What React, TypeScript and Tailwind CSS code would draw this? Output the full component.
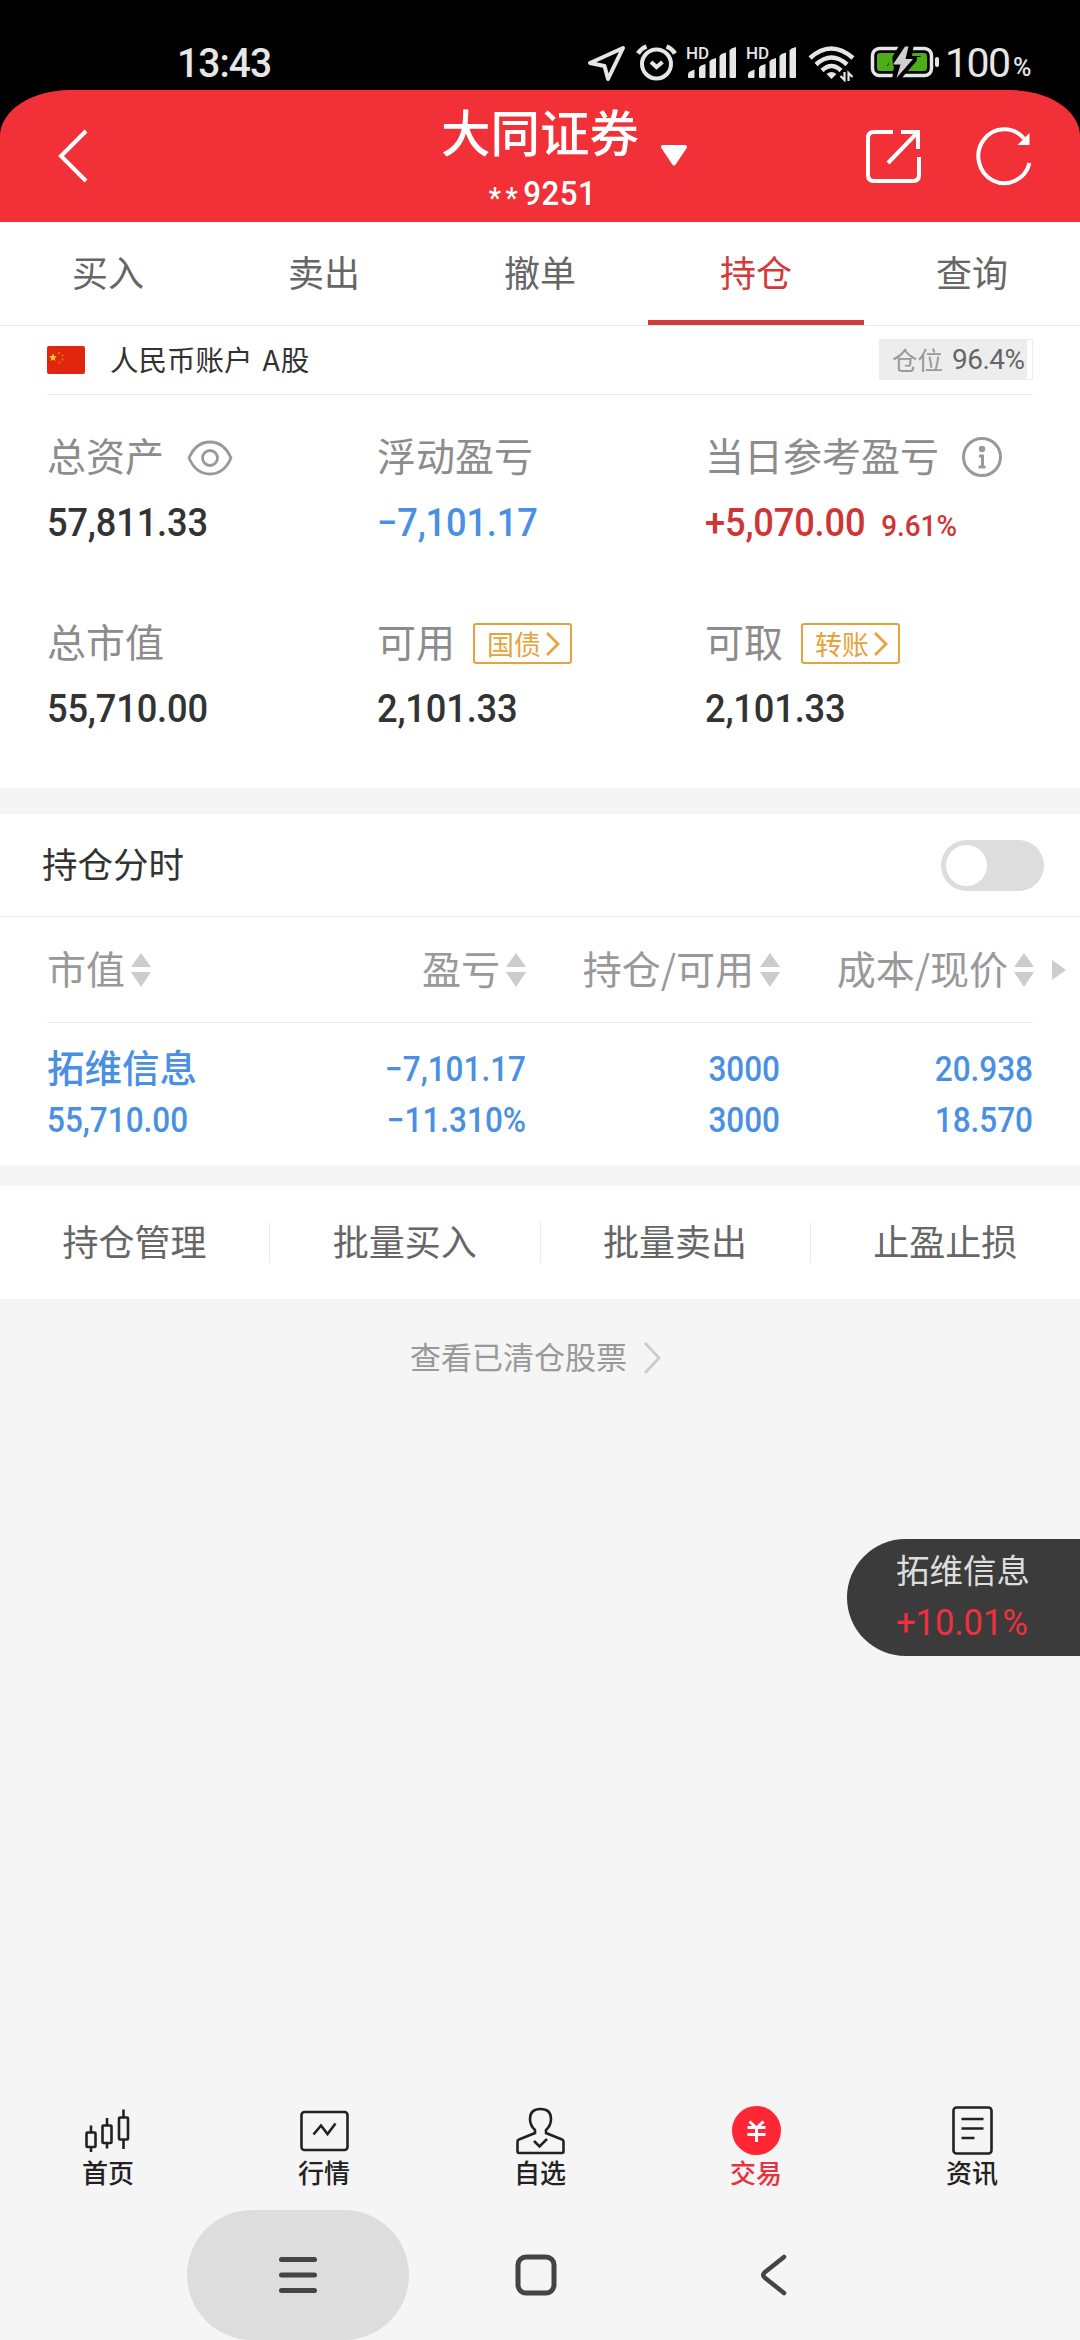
import type React from "react"

const CJK = "font-['Noto_Sans_CJK_SC',sans-serif]"
const NUM = "font-[Roboto,'Noto_Sans_CJK_SC',sans-serif]"

const tabs = ["买入", "卖出", "撤单", "持仓", "查询"]
const actions = ["持仓管理", "批量买入", "批量卖出", "止盈止损"]

const SignalIcon = () => (
  <div className="relative w-[50px] h-[36px]">
    <span className="absolute left-0 top-[2px] text-[17px] leading-[14px] font-medium">HD</span>
    <svg className="absolute left-0 top-0" width="50" height="36" viewBox="0 0 50 36" fill="#e6e6e6">
      <path d="M2 30.500q0-2 2-3l4.500-2v7.500q0 1-1 1H3q-1 0-1-1z" />
      <path d="M13 23.500l2-2 4.500-1.500v13q0 1-1 1h-4.500q-1 0-1-1z" />
      <path d="M23.500 17.500l2-2 4.500-1.500v19q0 1-1 1h-4.500q-1 0-1-1z" />
      <path d="M33.500 12l2-2 4.500-1.500v24.500q0 1-1 1h-4.500q-1 0-1-1z" />
      <path d="M43.500 6.500l2-2 4.500-1.500v30q0 1-1 1h-4.500q-1 0-1-1z" />
    </svg>
  </div>
)

const StatusBar = () => (
  <div className={`h-[90px] pt-[44px] flex items-start text-[#e6e6e6] ${NUM}`}>
    <span className="w-[223px] ml-[177px] origin-left scale-x-[0.95] text-[41px] leading-[38px] tracking-[-1px] font-medium">13:43</span>
    <svg className="ml-[187px]" width="40" height="38" viewBox="0 0 40 38" fill="none" stroke="#e6e6e6" strokeWidth="4" strokeLinejoin="round">
      <path d="M3 19L36 4 21 35 17.500 22z" />
    </svg>
    <svg className="ml-[9px]" width="42" height="38" viewBox="0 0 42 38" fill="none" stroke="#e6e6e6" strokeWidth="4">
      <circle cx="20.500" cy="20" r="14.500" />
      <path d="M15 18l5.500 5 6-5" />
      <path d="M2 9.500q3-5 8.500-7M39 9.500q-3-5-8.500-7" strokeWidth="4.500" />
    </svg>
    <div className="ml-[8px]"><SignalIcon /></div>
    <div className="ml-[10px]"><SignalIcon /></div>
    <svg className="ml-[12px]" width="48" height="38" viewBox="0 0 48 38" fill="none" stroke="#e6e6e6" strokeWidth="4.500">
      <path d="M2 14q21-19 43 0" />
      <path d="M8 20.500q15.500-14 31 0" />
      <path d="M14 26.500q9.500-9 19 0" />
      <path d="M18.500 30q5-4 10 0l-5 5z" fill="#e6e6e6" stroke="none" />
      <path d="M36.500 28v8l-4-4M40.500 37v-8l4 4" strokeWidth="2.200" />
    </svg>
    <svg className="ml-[14px]" width="70" height="38" viewBox="0 0 70 38">
      <rect x="2.500" y="4.500" width="59" height="27" rx="7" fill="none" stroke="#e6e6e6" strokeWidth="3.500" />
      <rect x="7" y="9" width="50" height="18" rx="3" fill="#4caf17" />
      <rect x="65" y="13" width="4" height="10" rx="2" fill="#e6e6e6" />
      <path d="M30 0L17 22h7l-2 14h8l21-24H42l2-12z" fill="#000" />
      <path d="M22 10L18 22h5zM46 26l5-13h-4z" fill="#4caf17" />
      <path d="M35 2.500L23 20.500h7.500L26.500 34 43 15h-7.500l3-12.500z" fill="#d0d0d0" />
    </svg>
    <span className="w-[68px] ml-[5px] text-[41px] leading-[38px] tracking-[-1.5px]">100</span>
    <span className="pt-[9px] text-[25px] leading-[30px] font-medium">%</span>
  </div>
)

const Header = () => (
  <div className="bg-black">
    <div className="h-[132px] bg-[#f13038] rounded-t-[70px_46px] grid grid-cols-[1fr_auto_1fr] text-white overflow-hidden">
      <svg className="ml-[57px] mt-[39px]" width="32" height="54" viewBox="0 0 32 54" fill="none" stroke="#fff" strokeWidth="4">
        <path d="M29 2L4 27l25 25" />
      </svg>
      <div className="flex flex-col items-center">
        <h1 className="mt-[16px] text-[49.500px] leading-[50px] font-medium">大同证券</h1>
        <div className={`mt-[20px] ml-[4px] flex scale-x-[0.92] text-[34px] leading-[34px] font-medium whitespace-nowrap ${NUM}`}>
          <span className="mt-[5px] mr-[1px] text-[30px] tracking-[5px]">**</span>
          <span className="tracking-[0.5px]">9251</span>
        </div>
      </div>
      <div className="flex">
        <svg className="ml-[21px] mt-[54px]" width="28" height="24" viewBox="0 0 28 24">
          <path d="M3 3h22L14 19.500z" fill="#fff" stroke="#fff" strokeWidth="4" strokeLinejoin="round" />
        </svg>
        <svg className="ml-[177px] mt-[38px]" width="56" height="56" viewBox="0 0 56 56" fill="none" stroke="#fff" strokeWidth="4">
          <path d="M28 4H9q-6 0-6 6v37q0 6 6 6h39q6 0 6-6V29" />
          <path d="M36 4h17v17M53 4L23 35" />
        </svg>
        <svg className="ml-[54px] mt-[36px]" width="60" height="60" viewBox="0 0 60 60" fill="none" stroke="#fff" strokeWidth="4">
          <path d="M54.500 37A26 27 0 1 1 49 12.500" />
          <path d="M54.500 7v12H42.500z" fill="#fff" stroke="none" />
        </svg>
      </div>
    </div>
  </div>
)

const Tabs = () => (
  <nav className="h-[104px] flex border-b border-[#ebebeb]">
    {tabs.map((tab) => (
      <div
        key={tab}
        className={`flex-1 pt-[29px] text-center text-[36px] leading-[40px] ${tab === "持仓" ? "text-[#d33a3a] border-b-[5px] border-[#d33a3a]" : "text-[#666]"}`}
      >
        {tab}
      </div>
    ))}
  </nav>
)

const AccountRow = () => (
  <div className="h-[69px] mx-[47px] flex border-b border-[#ebebeb]">
    <svg className="mt-[20px]" width="38" height="28" viewBox="0 0 38 28">
      <rect width="38" height="28" rx="2" fill="#e0260f" />
      <path d="M6 7.500l1.100 2.500 2.700.3-2 1.900.6 2.700L6 13.500l-2.400 1.400.6-2.700-2-1.900 2.700-.3z" fill="#fbd116" />
      <g fill="#f07a1a">
        <circle cx="12" cy="7" r="1" />
        <circle cx="15.500" cy="9.500" r="1" />
        <circle cx="15.500" cy="13.500" r="1" />
        <circle cx="12.500" cy="16.500" r="1" />
      </g>
    </svg>
    <span className="ml-[25px] mt-[13px] flex-1 text-[28.500px] leading-[40px] text-[#333]">
      人民币账户<span className="ml-[10px]">A</span>
      <span className="ml-[1px]">股</span>
    </span>
    <div className="mt-[13px] w-[154px] h-[41px] border border-[#ededed]">
      <div className="w-[147px] h-full bg-[#ededed] pl-[12px] flex items-center whitespace-nowrap text-[#999] text-[25.500px]">
        仓位<span className="ml-[9px] text-[28px] text-[#666] tracking-[-0.5px] font-[Roboto,sans-serif]">96.4%</span>
      </div>
    </div>
  </div>
)

const Tag = ({ text }: { text: string }) => (
  <span className="ml-[18px] w-[99px] h-[41px] border-[2.500px] border-[#e8a23c] rounded-[3px] flex items-center pl-[12px] text-[27px] leading-[36px] text-[#e8a23c]">
    {text}
    <svg width="16" height="24" viewBox="0 0 16 24" className="ml-[4px] shrink-0" fill="none" stroke="#e8a23c" strokeWidth="2.800">
      <path d="M2 1l11 11L2 23" />
    </svg>
  </span>
)

interface StatProps {
  label: string
  value: string
  color?: string
  extra?: React.ReactNode
  suffix?: string
}

const Stat: React.FC<StatProps> = ({ label, value, color = "text-[#333]", extra, suffix }) => (
  <div className="h-[106px] flex flex-col justify-between whitespace-nowrap">
    <div className="h-[41px] flex items-center text-[39px] leading-[36px] text-[#8c8c8c]">
      <span className="mb-[7px]">{label}</span>
      {extra}
    </div>
    <div className={`h-[40px] flex items-baseline leading-[40px] font-medium origin-left scale-x-[0.93] ${color} ${NUM}`}>
      <span className="text-[39px] tracking-[-0.2px]">{value}</span>
      {suffix && <span className="ml-[17px] text-[30px]">{suffix}</span>}
    </div>
  </div>
)

const EyeIcon = () => (
  <svg className="ml-[23px]" width="46" height="36" viewBox="0 0 46 36" fill="none" stroke="#999" strokeWidth="2.800">
    <path d="M2 18Q9 2 23 2t21 16Q37 34 23 34T2 18z" />
    <circle cx="23" cy="18" r="7.500" />
  </svg>
)

const InfoIcon = () => (
  <svg className="ml-[22px]" width="42" height="42" viewBox="0 0 42 42" fill="none" stroke="#999" strokeWidth="3">
    <circle cx="21" cy="20" r="18.500" />
    <circle cx="21" cy="12" r="3.200" fill="#999" stroke="none" />
    <path d="M18 19h3.500v11M17.500 30h7" />
  </svg>
)

const Assets = () => (
  <div className="h-[393px] pt-[42px] pl-[47px] grid grid-cols-[330px_328px_1fr] content-start gap-y-[80px]">
    <Stat label="总资产" value="57,811.33" extra={<EyeIcon />} />
    <Stat label="浮动盈亏" value="−7,101.17" color="text-[#4a90e2]" />
    <Stat label="当日参考盈亏" value="+5,070.00" color="text-[#d03535]" suffix="9.61%" extra={<InfoIcon />} />
    <Stat label="总市值" value="55,710.00" />
    <Stat label="可用" value="2,101.33" extra={<Tag text="国债" />} />
    <Stat label="可取" value="2,101.33" extra={<Tag text="转账" />} />
  </div>
)

const SortHead = ({ text }: { text: string }) => (
  <div className="flex items-center justify-end whitespace-nowrap">
    <span className="mb-[6px]">{text}</span>
    <svg className="ml-[6px]" width="20" height="34" viewBox="0 0 20 34" fill="#ccc">
      <path d="M10 0l10 14H0zM10 34L0 19h20z" />
    </svg>
  </div>
)

const Cell = ({ a, b }: { a: string; b: string }) => (
  <div className={`pt-px text-right text-[35px] leading-[51px] font-medium whitespace-nowrap origin-right scale-x-[0.9] ${NUM}`}>
    <div>{a}</div>
    <div>{b}</div>
  </div>
)

const Positions = () => (
  <div className="h-[351px] bg-white">
    <div className="h-[103px] pl-[42px] pr-[36px] flex items-center justify-between border-b border-[#ebebeb]">
      <span className="mb-[4px] text-[35.500px] leading-[36px] text-[#333]">持仓分时</span>
      <div className="w-[103px] h-[51px] p-[5px] rounded-full bg-[#ddd]">
        <div className="w-[41px] h-[41px] rounded-full bg-white" />
      </div>
    </div>
    <div className="h-[105px] flex items-center text-[39px] leading-[40px] text-[#999]">
      <div className="w-[1034px] pl-[47px] grid grid-cols-[104px_375px_254px_254px]">
        <SortHead text="市值" />
        <SortHead text="盈亏" />
        <SortHead text="持仓/可用" />
        <SortHead text="成本/现价" />
      </div>
      <svg className="ml-[18px]" width="14" height="20" viewBox="0 0 14 20" fill="#ccc">
        <path d="M0 0l14 10L0 20z" />
      </svg>
    </div>
    <div className="mx-[47px] pt-[20px] border-t border-[#ebebeb] grid grid-cols-[225px_254px_254px_253px] text-[#4a90e2]">
      <div className="whitespace-nowrap">
        <div className="h-[52px] text-[37.500px] leading-[46px] font-medium">拓维信息</div>
        <div className={`text-[35px] leading-[51px] font-medium origin-left scale-x-[0.9] ${NUM}`}>55,710.00</div>
      </div>
      <Cell a="−7,101.17" b="−11.310%" />
      <Cell a="3000" b="3000" />
      <Cell a="20.938" b="18.570" />
    </div>
  </div>
)

const ActionBar = () => (
  <div className="mt-[21px] h-[113px] bg-white flex items-center">
    {actions.map((action, i) => (
      <div
        key={action}
        className={`flex-1 h-[41px] text-center text-[36px] leading-[37px] text-[#666] ${i < actions.length - 1 ? "border-r border-[#ebebeb]" : ""}`}
      >
        {action}
      </div>
    ))}
  </div>
)

const navItems = [
  {
    label: "首页",
    icon: (
      <>
        <path d="M7 20.500v7M7 42v5M23 13v7M23 38v5.500M39.500 4.500v8M39.500 35v9" />
        <rect x="2.500" y="27.500" width="9" height="14.500" rx="1" />
        <rect x="18.500" y="20.500" width="9" height="17.500" rx="1" />
        <rect x="35" y="12.500" width="9" height="22" rx="1" />
      </>
    ),
  },
  {
    label: "行情",
    icon: (
      <>
        <rect x="1.500" y="7" width="46" height="38" rx="3" />
        <path d="M13.500 29.500l7.500-9 6.500 8.500L35.500 18.500" />
      </>
    ),
  },
  {
    label: "自选",
    icon: (
      <>
        <path d="M19 25q-5-4.500-5-11Q14 4 24.500 4T35 14q0 6.500-5 11v3l16 6.500q1.500.5 1.500 2v10q0 1.500-1.500 1.500H3q-1.500 0-1.500-1.500v-10q0-1.500 1.500-2L19 28z" />
        <path d="M18 36l5.500 5.500L31 34" />
      </>
    ),
  },
  {
    label: "交易",
    icon: (
      <>
        <ellipse cx="24.500" cy="25.500" rx="24.500" ry="24.500" fill="#ff2636" stroke="none" />
        <path d="M17.500 16.500l7 6.500 7-6.500M15.500 22.500h18M15.500 29.500h18M24.500 22v15" stroke="#fff" strokeWidth="3" />
      </>
    ),
  },
  {
    label: "资讯",
    icon: (
      <>
        <rect x="5.500" y="2.500" width="38" height="46" rx="3" />
        <path d="M13.500 14h22M13.500 23.500h22M13.500 33h13" />
      </>
    ),
  },
]

const BottomNav = () => (
  <nav className="mt-auto h-[105px] flex">
    {navItems.map(({ label, icon }) => (
      <div key={label} className="flex-1 flex flex-col items-center">
        <svg className="ml-px" width="50" height="52" viewBox="0 0 50 52" fill="none" stroke="#222" strokeWidth="2.600">
          {icon}
        </svg>
        <span className={`-mt-px text-[26px] leading-[32px] font-medium ${label === "交易" ? "text-[#e8323f]" : "text-[#222]"}`}>
          {label}
        </span>
      </div>
    ))}
  </nav>
)

const SystemNav = () => (
  <div className="h-[130px] pl-[187px] flex items-center">
    <div className="w-[222px] h-[130px] rounded-full bg-[#ddd] flex items-center justify-center">
      <svg width="38" height="38" viewBox="0 0 38 38" stroke="#444" strokeWidth="5" strokeLinecap="round">
        <path d="M2.500 3.500h33M2.500 19h33M2.500 34.500h33" />
      </svg>
    </div>
    <svg className="ml-[106px]" width="42" height="42" viewBox="0 0 42 42" fill="none" stroke="#444" strokeWidth="5">
      <rect x="3" y="3" width="36" height="36" rx="8" />
    </svg>
    <svg className="ml-[202px]" width="30" height="42" viewBox="0 0 30 42" fill="none" stroke="#444" strokeWidth="4.500" strokeLinecap="round" strokeLinejoin="round">
      <path d="M25 3L5.500 18.500q-2.500 2.500 0 5L25 39" />
    </svg>
  </div>
)

const FloatingQuote = () => (
  <div className="absolute right-0 top-[1539px] w-[233px] h-[117px] rounded-l-full bg-[#3b3b3b] pl-[49px] pt-[11px] whitespace-nowrap">
    <div className="text-[33.500px] leading-[38px] text-[#ddd]">拓维信息</div>
    <div className={`mt-[16px] origin-left scale-x-[0.96] text-[36px] leading-[38px] text-[#f0303e] ${NUM}`}>+10.01%</div>
  </div>
)

export default function App() {
  return (
    <div className={`relative w-[1080px] h-[2340px] flex flex-col bg-[#f5f5f5] overflow-hidden ${CJK}`}>
      <div className="bg-black">
        <StatusBar />
        <Header />
      </div>
      <div className="bg-white">
        <Tabs />
        <AccountRow />
        <Assets />
      </div>
      <div className="mt-[26px]">
        <Positions />
      </div>
      <ActionBar />
      <div className="mt-[37px] ml-[410px] flex items-center text-[31px] leading-[40px] text-[#999]">
        查看已清仓股票
        <svg className="ml-[16px] mt-[3px]" width="18" height="32" viewBox="0 0 18 32" fill="none" stroke="#ccc" strokeWidth="2.800">
          <path d="M2 1l14 15L2 31" />
        </svg>
      </div>
      <BottomNav />
      <SystemNav />
      <FloatingQuote />
    </div>
  )
}
